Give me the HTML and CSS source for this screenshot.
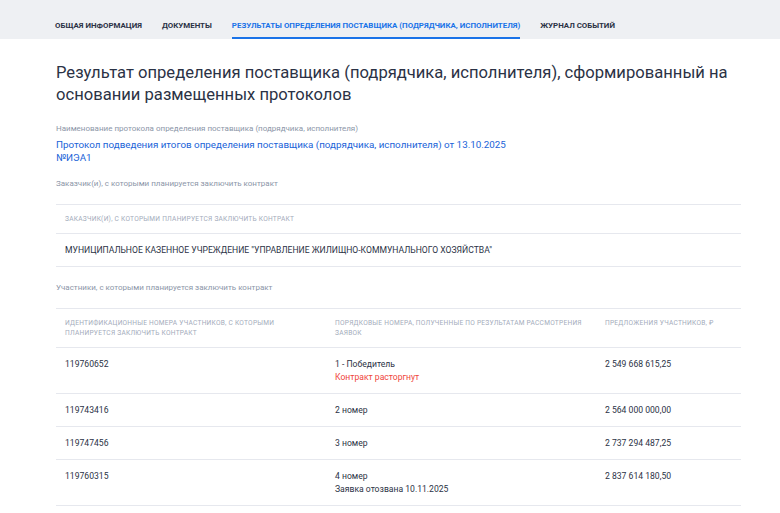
FILE: index.html
```html
<!DOCTYPE html>
<html lang="ru">
<head>
  <meta charset="UTF-8" />
  <title>Результаты определения поставщика</title>
  <link rel="stylesheet" href="styles.css">
</head>
<body>

  <!-- ВКЛАДКИ -->
  <div class="tabs">
    <a class="tab">Общая информация</a>
    <a class="tab">Документы</a>
    <a class="tab active">Результаты определения поставщика (подрядчика, исполнителя)</a>
    <a class="tab">Журнал событий</a>
  </div>

  <div class="content">
    <h1 class="title">Результат определения поставщика (подрядчика, исполнителя), сформированный на основании размещенных протоколов</h1>

    <div class="label">Наименование протокола определения поставщика (подрядчика, исполнителя)</div>
    <a class="link">Протокол подведения итогов определения поставщика (подрядчика, исполнителя) от 13.10.2025 №ИЭА1</a>

    <div class="label section">Заказчик(и), с которыми планируется заключить контракт</div>
    <table class="grid">
      <tr><th>Заказчик(и), с которыми планируется заключить контракт</th></tr>
      <tr><td class="upper">Муниципальное казенное учреждение "Управление жилищно-коммунального хозяйства"</td></tr>
    </table>

    <div class="label section after-table">Участники, с которыми планируется заключить контракт</div>
    <table class="grid">
      <tr>
        <th class="col1">Идентификационные номера участников, с которыми планируется заключить контракт</th>
        <th class="col2">Порядковые номера, полученные по результатам рассмотрения заявок</th>
        <th>Предложения участников, ₽</th>
      </tr>
      <tr>
        <td>119760652</td>
        <td>1 - Победитель<div class="note red">Контракт расторгнут</div></td>
        <td>2 549 668 615,25</td>
      </tr>
      <tr>
        <td>119743416</td>
        <td>2 номер</td>
        <td>2 564 000 000,00</td>
      </tr>
      <tr>
        <td>119747456</td>
        <td>3 номер</td>
        <td>2 737 294 487,25</td>
      </tr>
      <tr>
        <td>119760315</td>
        <td>4 номер<div class="note">Заявка отозвана 10.11.2025</div></td>
        <td>2 837 614 180,50</td>
      </tr>
    </table>
  </div>

</body>
</html>
```

FILE: styles.css
```css
body {
  font-family: Roboto, 'Liberation Sans', sans-serif;
  background: #ffffff;
  color: #334059;
  margin: 0;
  padding: 0;
}

.tabs {
  background: #eef0f3;
  height: 39px;
  padding: 0 55px;
  display: flex;
  gap: 20px;
}

.tab {
  font-size: 7.9px;
  font-weight: 700;
  text-transform: uppercase;
  color: #2b3245;
  padding-top: 21px;
  box-sizing: border-box;
  height: 39px;
  border-bottom: 2px solid transparent;
}

.tab.active {
  color: #1a73e8;
  border-bottom-color: #1a73e8;
}

.content {
  padding: 0 39px 0 56px;
}

.title {
  font-size: 16.6px;
  font-weight: 400;
  line-height: 22px;
  color: #2b3245;
  margin: 23px 0 18px;
}

.label {
  font-size: 8px;
  color: #8c96a8;
  margin-bottom: 5px;
}

.label.section {
  margin-top: 15px;
  margin-bottom: 16px;
}

.label.after-table {
  margin-top: 16px;
}

.link {
  display: block;
  font-size: 9.8px;
  line-height: 13px;
  color: #1a63d8;
  max-width: 470px;
}

.grid {
  width: 100%;
  border-collapse: collapse;
  table-layout: fixed;
}

.grid th {
  font-size: 6.6px;
  font-weight: 400;
  letter-spacing: 0.25px;
  text-transform: uppercase;
  color: #a3abbb;
  text-align: left;
  line-height: 10px;
  padding: 9px 9px 9px;
  border-top: 1px solid #e6e8ee;
  border-bottom: 1px solid #e6e8ee;
  vertical-align: top;
}

.grid td {
  font-size: 8.6px;
  line-height: 14px;
  color: #2b3245;
  padding: 9px 9px 9px;
  border-bottom: 1px solid #e6e8ee;
  vertical-align: top;
}

.grid td.upper {
  text-transform: uppercase;
  font-size: 8.6px;
}

.grid .col1, .grid .col2 {
  width: 252px;
}

.note {
  line-height: 13px;
}

.note.red {
  color: #f0453b;
}
```
